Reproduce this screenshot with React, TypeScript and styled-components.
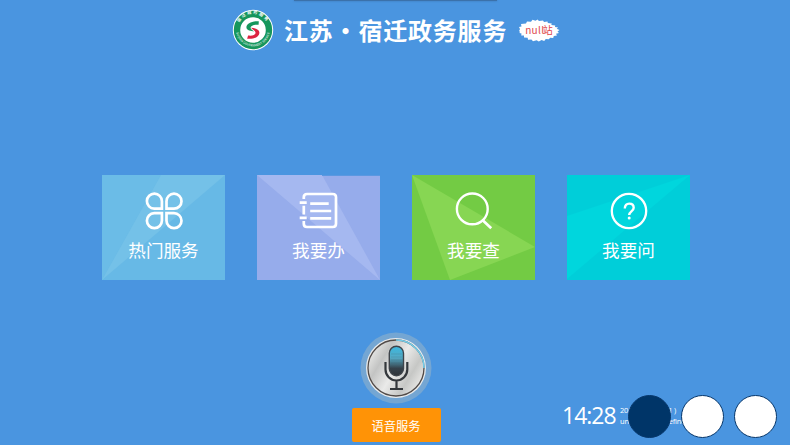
import React from "react";
import styled, { createGlobalStyle } from "styled-components";

const GlobalStyle = createGlobalStyle`
  * { box-sizing: border-box; }
  body { margin: 0; background: #4a95e0; }
`;

const Page = styled.main`
  position: relative;
  width: 790px;
  height: 445px;
  overflow: hidden;
  display: flex;
  flex-direction: column;
  background: #4a95e0;
  color: #fff;
  font-family: "Noto Sans CJK SC", sans-serif;
`;

const TopEdge = styled.div`
  width: 203px;
  height: 1px;
  flex: none;
  margin-left: 294px;
  background: #3b71aa;
  box-shadow: 0 0 2px #3569a2;
`;

const Header = styled.header`
  height: 58px;
  flex: none;
  display: flex;
  align-items: center;
  padding-left: 232px;
`;

const Title = styled.h1`
  margin: 0 0 0 10px;
  width: 225px;
  display: flex;
  font-size: 24px;
  line-height: 36px;
  font-weight: 700;
  letter-spacing: 0.8px;
  white-space: nowrap;
`;

const Dot = styled.span`
  width: 24.8px;
  text-align: center;
`;

const Station = styled.div`
  display: grid;
  place-items: center;
  margin-left: 9px;
  width: 42px;
  height: 26px;
  > * { grid-area: 1 / 1; }
`;

const StationName = styled.span`
  display: flex;
  color: #e0474c;
  font-size: 10px;
  line-height: 14px;
  white-space: nowrap;
`;

const StationCode = styled.span`
  letter-spacing: 0.3px;
`;

const StationSuffix = styled.span`
  margin-left: -1.5px;
`;

const Tiles = styled.nav`
  display: flex;
  gap: 32px;
  margin: 116px 0 0 102px;
`;

const Tile = styled.button<{ $color: string }>`
  display: grid;
  width: 123px;
  height: 105px;
  padding: 0;
  border: 0;
  color: #fff;
  font-family: inherit;
  background: ${(p) => p.$color};
  > * { grid-area: 1 / 1; }
`;

const TileContent = styled.span`
  display: flex;
  flex-direction: column;
  align-items: center;
  padding-top: 16px;
`;

const TileLabel = styled.span`
  margin-top: 7px;
  font-size: 17.6px;
  line-height: 24px;
  font-weight: 400;
`;

const Voice = styled.section`
  display: flex;
  flex-direction: column;
  align-items: center;
  width: 90px;
  margin: 52px 0 0 351px;
`;

const VoiceButton = styled.button`
  width: 89px;
  height: 34px;
  margin-top: 4px;
  padding: 1px 0 0;
  border: 0;
  border-radius: 2px;
  background: #ff9306;
  color: #fff;
  font: 400 12.3px/18px "Noto Sans CJK SC", sans-serif;
`;

const Status = styled.footer`
  position: absolute;
  left: 562px;
  top: 399px;
  display: flex;
  align-items: center;
  height: 31px;
`;

const Clock = styled.time`
  width: 58px;
  font: 400 23px/30px "Open Sans", sans-serif;
  letter-spacing: -1px;
`;

const DateLines = styled.div`
  padding-top: 2px;
  font: 400 7.5px/11px "Open Sans", "Noto Sans CJK SC", sans-serif;
  white-space: nowrap;
`;

const DateLine = styled.div`
  display: flex;
  justify-content: space-between;
  width: 56px;
  letter-spacing: -0.22px;
`;

const Circles = styled.div`
  position: absolute;
  left: 628px;
  top: 395px;
  display: flex;
  gap: 10px;
`;

const Circle = styled.span<{ $active?: boolean }>`
  width: 43px;
  height: 43px;
  border: 1px solid #07376b;
  border-radius: 50%;
  background: ${(p) => (p.$active ? "#003568" : "#fff")};
`;

const Logo = () => (
  <svg width="42" height="42" viewBox="0 0 42 42">
    <defs>
      <path id="arcTop" d="M6.2 23.5A15.2 15.2 0 1 1 35.8 23.5" />
      <path id="arcBottom" d="M4.2 23A17 17 0 0 0 37.8 23" />
    </defs>
    <circle cx="21" cy="21" r="20.2" fill="#fff" />
    <circle cx="21" cy="21" r="16" fill="none" stroke="#16965c" strokeWidth="6.4" />
    <g fill="#fff" fontFamily="Noto Sans CJK SC, sans-serif">
      <text fontSize="4.2" fontWeight="700" letterSpacing="1.5">
        <textPath href="#arcTop" startOffset="50%" textAnchor="middle">宿迁政务服务</textPath>
      </text>
      <text fontSize="3" letterSpacing="0.1">
        <textPath href="#arcBottom" startOffset="50%" textAnchor="middle">SUQIAN GOVERNMENT SERVICE</textPath>
      </text>
    </g>
    <path d="M26.8 12.2C20 11.8 14.6 14.4 14.4 18.2c-.1 3.6 5 3.9 7.7 4.2-1.7-1.3-3.7-2-3.5-3.8.3-2.1 3.6-3.3 8-2.8z" fill="#16965c" />
    <path d="M19 18.7c3.5.4 8.6 1.3 8.4 5.2-.3 4.4-6.5 6.6-12.3 5.8l1-3.1c3.7.5 7.3-.2 7.4-2.8.1-1.9-2.5-3-4.5-5.1z" fill="#dc2440" />
  </svg>
);

const Splash = () => (
  <svg width="42" height="26" viewBox="0 0 42 26">
    <path
      fill="#fff"
      d="M1 10l2.5-.6L3 7l5-.6 1-2 4 .4 1.5-2 3 1 2-1.2 1.5 1.5 4-.6 1 1.5 3.5-.6.3 1.7 4 .4-.5 1.4 4 .5-.4 1.5 3.2.7-1.4 1.2 2.8 1.2-2 1.5 1.5 1.4-3 .8 1 1.8-3.2.4-.6 2-3-.2-1.4 1.6-3-.2-1.6 1.8-2.6-.8-2.8 1.5-2.2-1.4-3.6 1-1.6-1.8-3.4.4-.3-2-3.7-.2v-2l-2.8-.2.3-1.8-2-.6.5-1.4L1 14.2 2 12z"
    />
  </svg>
);

const Facets = ({ children }: { children: React.ReactNode }) => (
  <svg width="123" height="105" viewBox="0 0 123 105">{children}</svg>
);

const iconProps = {
  width: 40,
  height: 40,
  viewBox: "0 0 40 40",
  fill: "none",
  stroke: "#fff",
  strokeWidth: 2.7,
};

const CloverIcon = () => (
  <svg {...iconProps}>
    <path d="M17.9 17.7H10.2A7.5 7.5 0 1 1 17.9 10.2zM22.5 17.7V10.2A7.5 7.5 0 1 1 30 17.7zM17.9 22.2V29.8A7.5 7.5 0 1 1 10.2 22.2zM22.5 22.2H30A7.5 7.5 0 1 1 22.5 29.8z" />
  </svg>
);

const NotebookIcon = () => (
  <svg {...iconProps}>
    <path d="M4.8 8V6.2Q4.8 3 8 3H33.8q3.2 0 3.2 3.2V32.8Q37 36 33.8 36H8Q4.8 36 4.8 32.8V30M4.8 14.8v8.7" />
    <path d="M.7 11.7h7M.7 26.8h7M11.2 12.6h18.5M11.2 20h21M11.2 27.4h21" strokeWidth="2.7" />
  </svg>
);

const SearchIcon = () => (
  <svg {...iconProps}>
    <circle cx="18.3" cy="17.9" r="15.4" strokeWidth="2.4" />
    <path d="M28.2 28.7l9 8.6" />
  </svg>
);

const HelpIcon = () => (
  <svg {...iconProps}>
    <circle cx="20" cy="20" r="17.2" strokeWidth="2.3" />
    <path d="M15.8 17.4c0-3.2 1.8-4.8 4.4-4.8 2.7 0 4.5 1.6 4.5 4.1 0 3.6-4.5 3.8-4.5 7.3" strokeWidth="2.4" />
    <circle cx="20.2" cy="26.9" r="1.5" fill="#fff" stroke="none" />
  </svg>
);

const Microphone = () => (
  <svg width="72" height="72" viewBox="0 0 72 72">
    <defs>
      <linearGradient id="metal" x1="0" y1="0.2" x2="1" y2="0.8">
        <stop offset="0" stopColor="#eeeeec" />
        <stop offset="0.25" stopColor="#c3c4c3" />
        <stop offset="0.5" stopColor="#eaeae9" />
        <stop offset="0.75" stopColor="#c6c7c5" />
        <stop offset="1" stopColor="#f0f0ee" />
      </linearGradient>
      <linearGradient id="capsule" x1="0" y1="0" x2="0" y2="1">
        <stop offset="0" stopColor="#3bb8df" />
        <stop offset="0.4" stopColor="#55a9c4" />
        <stop offset="0.75" stopColor="#35414a" />
        <stop offset="1" stopColor="#2f3439" />
      </linearGradient>
    </defs>
    <circle cx="36" cy="36" r="35.5" fill="#74a6d3" />
    <circle cx="36" cy="36" r="30" fill="#e9ebec" />
    <circle cx="36" cy="36" r="28" fill="url(#metal)" stroke="#514a47" strokeWidth="1.3" />
    <path d="M36 8A28 28 0 0 1 64 36" fill="none" stroke="#73cbe8" strokeWidth="1.6" />
    <rect x="29.3" y="14.2" width="14.2" height="29.5" rx="7.1" fill="url(#capsule)" stroke="#3e444a" strokeWidth="1.4" />
    <path d="M31 22h11M31 25h11M31 28h11M31 31h11" stroke="#315565" strokeWidth=".5" opacity=".35" />
    <path d="M25.5 30v7.6a10.9 10.9 0 0 0 21.8 0V30M36.5 48.5v8M30 57h13" fill="none" stroke="#34383c" strokeWidth="2.2" />
  </svg>
);

const services = [
  {
    label: "热门服务",
    color: "#67b9e6",
    icon: <CloverIcon />,
    facets: (
      <>
        <path d="M0 0H59L0 105z" fill="#6bbce7" />
        <path d="M59 0H123L0 105z" fill="#74c1e8" />
      </>
    ),
  },
  {
    label: "我要办",
    color: "#96aceb",
    icon: <NotebookIcon />,
    facets: (
      <>
        <path d="M0 0H65L123 105z" fill="#a5b8f0" />
        <path d="M65 0H123V1H65z" fill="#5b98e1" />
      </>
    ),
  },
  {
    label: "我要查",
    color: "#73cb44",
    icon: <SearchIcon />,
    facets: <path d="M0 0L123 72L38 105z" fill="#87d653" />,
  },
  {
    label: "我要问",
    color: "#00ced9",
    icon: <HelpIcon />,
    facets: <path d="M123 0L0 41V104z" fill="#00d6dd" />,
  },
];

export default function App() {
  return (
    <Page>
      <GlobalStyle />
      <TopEdge />
      <Header>
        <Logo />
        <Title>
          江苏<Dot>·</Dot>宿迁政务服务
        </Title>
        <Station>
          <Splash />
          <StationName>
            <StationCode>null</StationCode>
            <StationSuffix>站</StationSuffix>
          </StationName>
        </Station>
      </Header>
      <Tiles>
        {services.map((s) => (
          <Tile key={s.label} $color={s.color}>
            <Facets>{s.facets}</Facets>
            <TileContent>
              {s.icon}
              <TileLabel>{s.label}</TileLabel>
            </TileContent>
          </Tile>
        ))}
      </Tiles>
      <Voice>
        <Microphone />
        <VoiceButton>语音服务</VoiceButton>
      </Voice>
      <Status>
        <Clock>14:28</Clock>
        <DateLines>
          <DateLine>
            <span>2018</span>
            <span>1 )</span>
          </DateLine>
          <DateLine>undefined undefined</DateLine>
        </DateLines>
      </Status>
      <Circles>
        <Circle $active />
        <Circle />
        <Circle />
      </Circles>
    </Page>
  );
}
